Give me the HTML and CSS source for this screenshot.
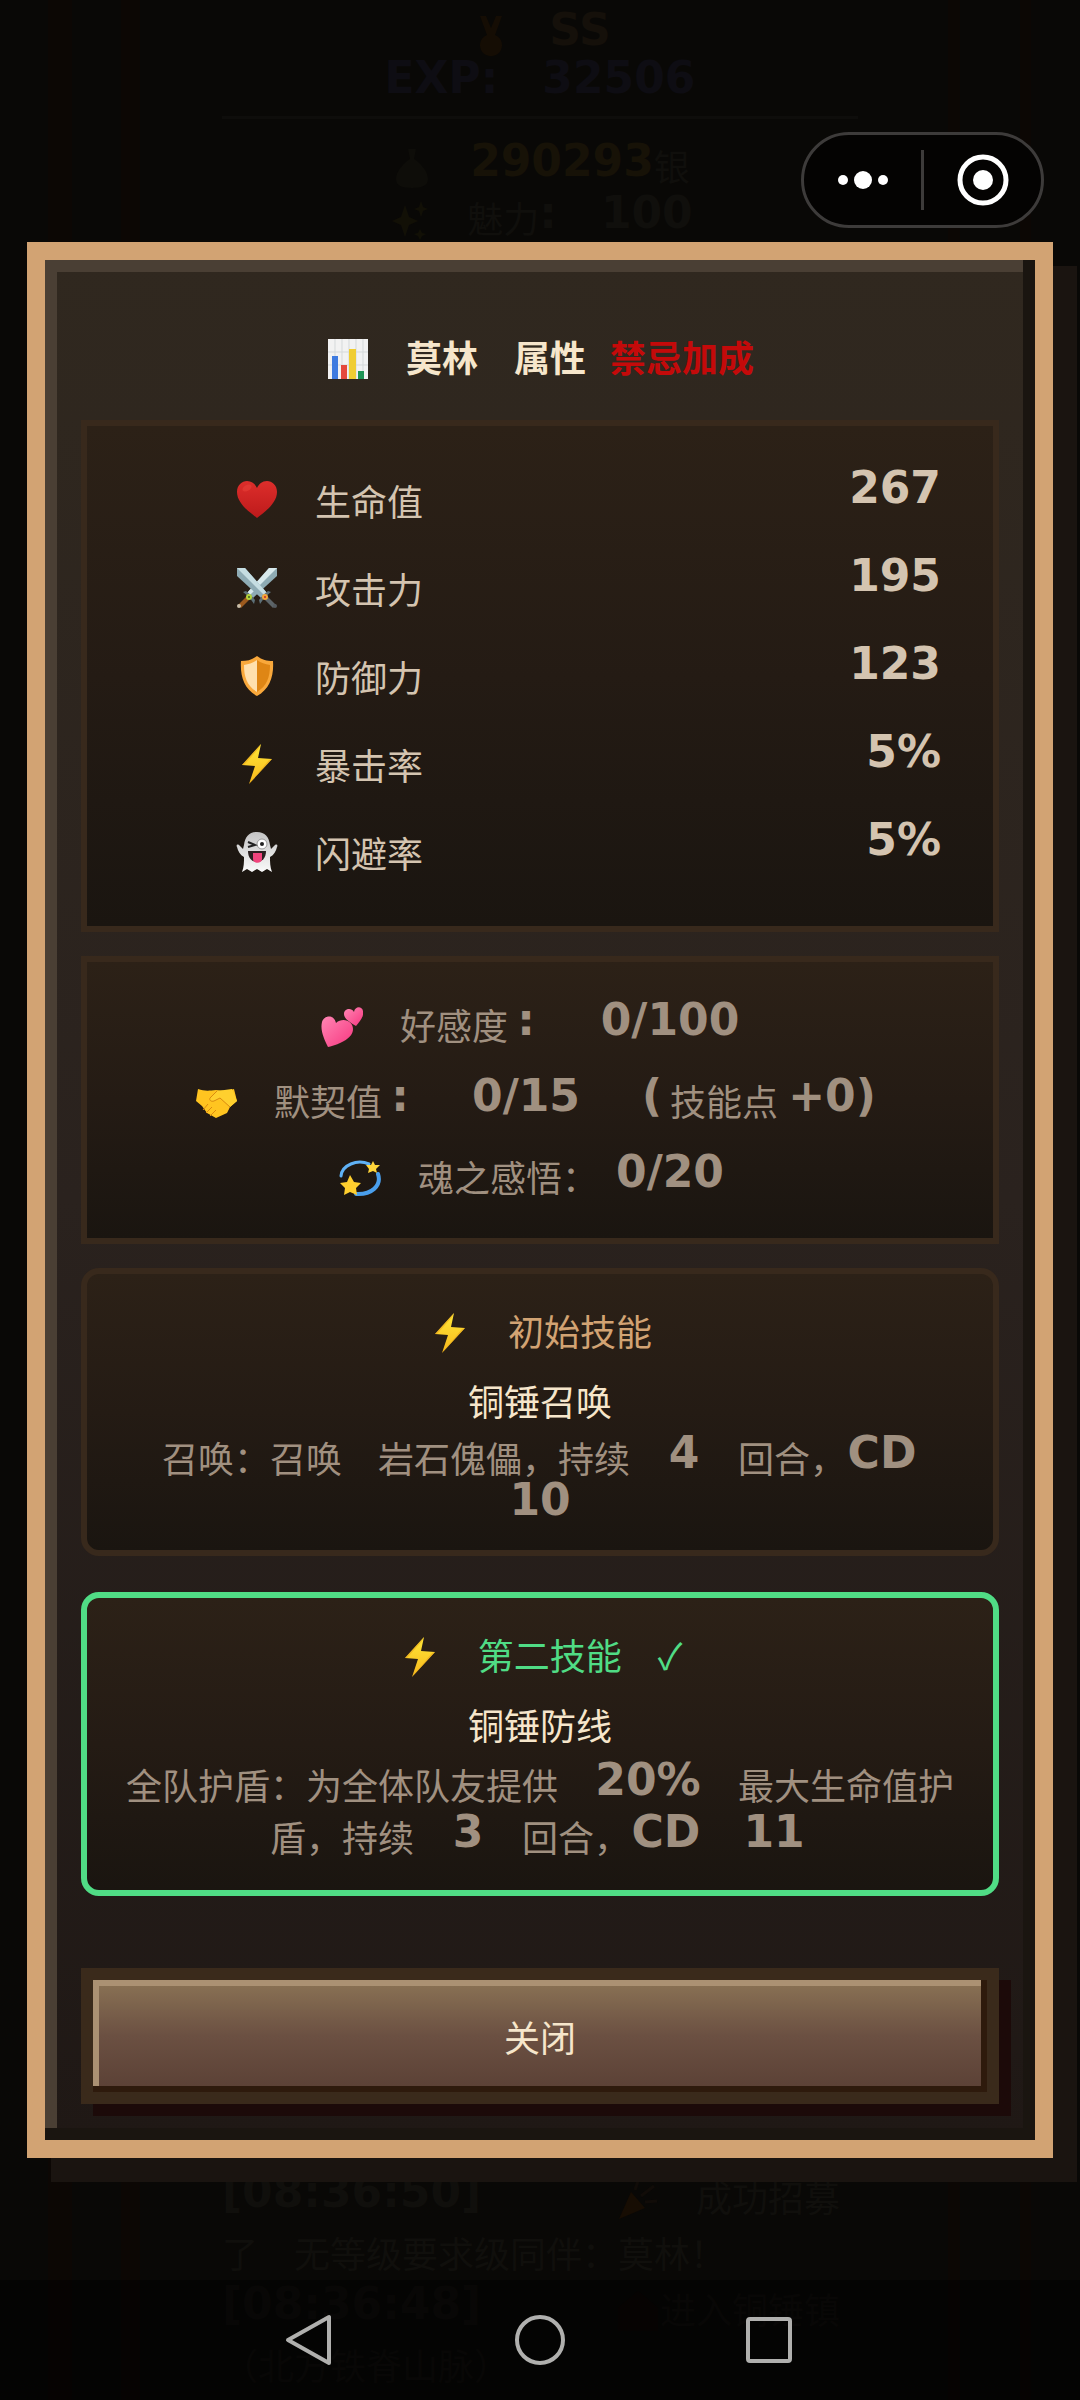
FILE: index.html
```
<!DOCTYPE html>
<html lang="zh-CN">
<head>
  <meta charset="UTF-8">
  <title>莫林 属性</title>
  <meta name="viewport" content="width=device-width, initial-scale=1">
<link rel="stylesheet" href="styles.css">
</head>
<body>
<svg class="defs" aria-hidden="true">
  <defs>
    <linearGradient id="g-bolt" x1="0" y1="0" x2="0" y2="1"><stop offset="0" stop-color="#ffe838"/><stop offset="1" stop-color="#f7b71c"/></linearGradient>
    <linearGradient id="g-heart" x1="0" y1="0" x2="0" y2="1"><stop offset="0" stop-color="#dd2e2b"/><stop offset="1" stop-color="#bd1a1b"/></linearGradient>
    <linearGradient id="g-pink" x1="0" y1="0" x2="1" y2="1"><stop offset="0" stop-color="#ff86b4"/><stop offset="1" stop-color="#f73780"/></linearGradient>
    <linearGradient id="g-ghost" x1="0" y1="0" x2="0" y2="1"><stop offset="0" stop-color="#c4c4c4"/><stop offset="1" stop-color="#fafafa"/></linearGradient>
  </defs>
  <symbol id="bolt" viewBox="0 0 42 42">
    <path d="M25 1 6 22l13 1-6 18 23-25-14-1 3-14z" fill="url(#g-bolt)"/>
    <path d="M25 1 6 22h2L23 5zM13 41l23-25-3 1z" fill="#e8a41a" opacity=".6"/>
  </symbol>
  <symbol id="heart" viewBox="0 0 42 42">
    <path d="M21 39C15 34 1 25 1 13 1 6 6 2 11 2c5 0 8 3 10 7 2-4 5-7 10-7 5 0 10 4 10 11 0 12-14 21-20 26z" fill="url(#g-heart)"/>
    <ellipse cx="11" cy="9" rx="5" ry="3" fill="#f04b42" opacity=".4" transform="rotate(-30 11 9)"/>
  </symbol>
  <symbol id="swords" viewBox="0 0 42 42">
    <path d="M41 1v8L17 31l-6-5L33 1z" fill="#8eabb4"/>
    <path d="M41 1 14 28l-3-2L33 1z" fill="#d8e9ec"/>
    <path d="M10 30 2 38l3 3 8-8z" fill="#9c5a1e"/>
    <path d="M7 25c4 3 8 7 11 12l1-4c-3-4-6-7-9-9z" fill="#5d7078"/>
    <path d="M1 1v8l24 22 6-5L9 1z" fill="#8eabb4"/>
    <path d="M1 1 28 28l3-2L9 1z" fill="#c5dde2"/>
    <path d="m32 30 8 8-3 3-8-8z" fill="#5c6468"/>
    <path d="M35 25c-4 3-8 7-11 12l-1-4c3-4 6-7 9-9z" fill="#5d7078"/>
    <circle cx="13" cy="30" r="3" fill="#b4d33c"/><circle cx="13" cy="30" r="1" fill="#3c5c20"/>
    <circle cx="29" cy="30" r="3" fill="#f2a63a"/><circle cx="29" cy="30" r="1" fill="#c62828"/>
    <circle cx="3" cy="39" r="2" fill="#c8bda8"/><circle cx="39" cy="39" r="2" fill="#555b60"/>
  </symbol>
  <symbol id="shield" viewBox="0 0 42 42">
    <path d="M21 1c5 4 10 5 16 5 1 15-3 28-16 35C8 34 4 21 5 6c6 0 11-1 16-5z" fill="#f9a83b"/>
    <path d="M21 5C17 8 13 9 8 10c0 12 3 21 13 27z" fill="#ffe0ae"/>
    <path d="M21 5c4 3 8 4 13 5 0 12-3 21-13 27z" fill="#df8615"/>
  </symbol>
  <symbol id="ghost" viewBox="0 0 42 42">
    <path d="M21 1c8 0 12 5 13 13l1 4 4-4c2-1 3 0 2 2-1 4-3 8-7 10 0 5 0 10 2 15l-5-3-5 3-5-3-5 3-5-3-5 3c2-5 2-10 2-15-4-2-6-6-7-10-1-2 0-3 2-2l4 4 1-4C9 6 13 1 21 1z" fill="url(#g-ghost)"/>
    <circle cx="26" cy="13" r="5" fill="#fff" stroke="#999"/><circle cx="26" cy="13" r="2" fill="#222"/>
    <path d="m12 11 7 3-7 2" fill="none" stroke="#222" stroke-width="2"/>
    <path d="M12 20h18c0 7-4 11-9 11s-9-4-9-11z" fill="#2b2020"/>
    <path d="M17 22h9v6c0 5-9 5-9 0z" fill="#f0447c"/>
  </symbol>
  <symbol id="hearts" viewBox="0 0 42 42">
    <path d="M7 41C3 33-1 24 1 16c2-7 12-8 14 1 7-6 17-2 17 6 0 9-12 15-25 18z" fill="url(#g-pink)"/>
    <path d="M35 20c-5-3-12-7-12-12 0-5 7-7 10-2 1-6 8-6 9-1 1 6-3 10-7 15z" fill="url(#g-pink)"/>
  </symbol>
  <symbol id="hands" viewBox="0 0 42 42">
    <path d="M3 7c6 2 10 2 18 1 8 1 12 1 18-1l3 12-7 6-3 6-11 5-9-5-5-7-6-5z" fill="#ffc420"/>
    <path d="M15 16l7-7 15-2 5 12-7 6-10-9-6 3c-3 1-5-1-4-3z" fill="#ffd02e"/>
    <path d="M22 9l-7 7c-1 2 1 4 4 3l6-3 10 9M13 22l-5 6M17 25l-6 6M21 28l-6 6" fill="none" stroke="#d98a10"/>
  </symbol>
  <symbol id="dizzy" viewBox="0 0 42 42">
    <path d="M30 6C18 1 3 7 2 18" fill="none" stroke="#5fb1f5" stroke-width="3" stroke-linecap="round"/>
    <path d="M39 16c4 12-7 21-22 20" fill="none" stroke="#4a9fec" stroke-width="4" stroke-linecap="round"/>
    <path d="m34 3 2 4 5 0-4 4 1 4-4-2-5 2 1-4-3-4h5z" fill="#ffd53a"/>
    <path d="m11 17 4 7 7 1-5 5 1 7-7-3-6 3 1-7-5-5 7-1z" fill="#ffcf2e"/>
  </symbol>
  <symbol id="chart" viewBox="0 0 42 42">
    <path d="M1 1h40v40H1z" fill="#f2f2f2"/>
    <path d="M1 14h40M1 27h40M8 1v40M15 1v40M22 1v40M29 1v40M36 1v40" stroke="#d5d9da" fill="none"/>
    <path d="M5 18h6v23H5z" fill="#3f7be0"/><path d="M14 27h6v14h-6z" fill="#e5483c"/>
    <path d="M22 11h7v30h-7z" fill="#f0cd32"/><path d="M31 33h6v8h-6z" fill="#1e9455"/>
  </symbol>
</svg>

<main class="page">
  <section class="status">
    <p class="rank"><svg class="icon" viewBox="0 0 42 42"><path d="M10 0h6l5 12 5-12h6l-7 19a11 11 0 1 1-8 0z" fill="#150d04"/></svg>　<span class="px">SS</span></p>
    <p class="exp"><span class="px">EXP:　32506</span></p>
    <hr>
    <p class="coins"><svg class="icon" viewBox="0 0 42 42"><path d="M17 2h8l-2 10c9 6 14 14 14 20 0 6-5 9-16 9S5 38 5 32c0-6 5-14 14-20z" fill="#0e0d09"/></svg>　<span class="px">290293</span><span class="unit">银</span></p>
    <p class="charm"><svg class="icon" viewBox="0 0 42 42"><path d="m17 6 4 12 9 4-9 4-4 12-4-12-9-4 9-4zM33 2l2 6 5 2-5 2-2 6-2-6-5-2 5-2zM32 30l2 4 4 1-4 2-2 4-2-4-4-2 4-1z" fill="#121006"/></svg>　魅力<span class="px">:　100</span></p>
  </section>
  <section class="log">
    <p><span class="px stamp">[08:36:50]</span><svg class="icon" viewBox="0 0 42 42"><path d="m14 14 14 16L2 41z" fill="#170d03"/><path d="m18 12 3-9m3 15 13-10M28 24l12-1" stroke="#110c08" stroke-width="3"/></svg>　成功招募<br>了　无等级要求级同伴：莫林！</p>
    <p><span class="px stamp">[08:36:48]</span><svg class="icon" viewBox="0 0 42 42"><path d="M21 1 41 18v23H1V18z" fill="#0d0704"/></svg>进入铜锤镇<br>（北方铁脊山脉）</p>
  </section>
</main>

<div class="overlay">
  <div class="modal" role="dialog" aria-labelledby="title">
    <h1 id="title"><svg class="icon"><use href="#chart"/></svg>　莫林　属性<span class="bonus">禁忌加成</span></h1>

    <dl class="card stats">
      <div class="stat"><dt><svg class="icon"><use href="#heart"/></svg>生命值</dt><dd class="px">267</dd></div>
      <div class="stat"><dt><svg class="icon"><use href="#swords"/></svg>攻击力</dt><dd class="px">195</dd></div>
      <div class="stat"><dt><svg class="icon"><use href="#shield"/></svg>防御力</dt><dd class="px">123</dd></div>
      <div class="stat"><dt><svg class="icon"><use href="#bolt"/></svg>暴击率</dt><dd class="px">5%</dd></div>
      <div class="stat"><dt><svg class="icon"><use href="#ghost"/></svg>闪避率</dt><dd class="px">5%</dd></div>
    </dl>

    <div class="card bonds">
      <p><svg class="icon"><use href="#hearts"/></svg>　好感度<span class="px w1">:</span>　<span class="px w5">0/100</span></p>
      <p><svg class="icon"><use href="#hands"/></svg>　默契值<span class="px w1">:</span>　<span class="px w4">0/15</span>　<span class="px w1">(</span>技能点<span class="px w3">+0)</span></p>
      <p><svg class="icon"><use href="#dizzy"/></svg>　魂之感悟：<span class="px w4">0/20</span></p>
    </div>

    <section class="card skill">
      <h2><svg class="icon"><use href="#bolt"/></svg>　初始技能</h2>
      <h3>铜锤召唤</h3>
      <p class="desc tight">召唤：召唤　岩石傀儡，持续　<span class="px w1">4</span>　回合，<span class="px w2">CD</span><br><span class="px w2">10</span></p>
    </section>

    <section class="card skill active">
      <h2><svg class="icon"><use href="#bolt"/></svg>　第二技能　✓</h2>
      <h3>铜锤防线</h3>
      <p class="desc">全队护盾：为全体队友提供　<span class="px w3">20%</span>　最大生命值护<br>盾，持续　<span class="px w1">3</span>　回合，<span class="px w2">CD</span>　<span class="px w2">11</span></p>
    </section>

    <button type="button" class="close">关闭</button>
  </div>
</div>

<div class="capsule">
  <button type="button" aria-label="更多">
    <svg width="50" height="20" viewBox="0 0 50 20"><circle cx="5" cy="10" r="5"/><circle cx="25" cy="10" r="9"/><circle cx="45" cy="10" r="5"/></svg>
  </button>
  <button type="button" aria-label="关闭小程序">
    <svg width="52" height="52" viewBox="0 0 52 52"><circle cx="26" cy="26" r="23" fill="none" stroke="#fff" stroke-width="5"/><circle cx="26" cy="26" r="10"/></svg>
  </button>
</div>

<nav class="navbar">
  <button type="button" aria-label="返回"><svg width="52" height="52" viewBox="0 0 52 52"><path d="M45 3v46L4 26z"/></svg></button>
  <button type="button" aria-label="主页"><svg width="52" height="52" viewBox="0 0 52 52"><circle cx="26" cy="26" r="23"/></svg></button>
  <button type="button" aria-label="最近任务"><svg width="52" height="52" viewBox="0 0 52 52"><rect x="4" y="5" width="42" height="42" rx="2"/></svg></button>
</nav>
</body>
</html>
```

FILE: styles.css
```
* {
  box-sizing: border-box;
  margin: 0;
  padding: 0;
}
body {
  position: relative;
  min-height: 100vh;
  background: #090806;
  color: #a09080;
  font: 36px/52px "Noto Sans CJK SC", sans-serif;
}
button {
  border: none;
  background: none;
  font: inherit;
}
.defs {
  position: absolute;
  width: 0;
  height: 0;
}
.icon {
  width: 42px;
  height: 42px;
  margin: 0 1px;
  vertical-align: -8px;
}

/* numbers sit on a grid of 36px cells */
.px {
  display: inline-block;
  font: bold 44px/36px "DejaVu Sans", sans-serif;
  vertical-align: 5px;
  white-space: nowrap;
}
.w1 { width: 36px; }
.w2 { width: 72px; }
.w3 { width: 108px; }
.w4 { width: 144px; }
.w5 { width: 180px; }

/* dimmed game page */
.page {
  display: flex;
  flex-direction: column;
  justify-content: space-between;
  height: 100vh;
  overflow: hidden;
  padding: 8px 222px;
  color: #100f0c;
  background: linear-gradient(90deg, transparent 48px, #0c0704 48px, #0c0704 72px, transparent 72px, transparent 121px, #0c0704 121px, #0c0704 140px, transparent 140px, transparent calc(100% - 132px), #0c0704 calc(100% - 132px), #0c0704 calc(100% - 120px), transparent calc(100% - 120px), transparent calc(100% - 60px), #0c0704 calc(100% - 60px), #0c0704 calc(100% - 49px), transparent calc(100% - 49px));
}
.status {
  text-align: center;
}
.status p {
  height: 52px;
}
.status .rank {
  height: 48px;
  color: #15100a;
}
.status .exp {
  height: 48px;
  color: #0e0d13;
}
.status hr {
  border: none;
  height: 3px;
  margin: 12px 0 20px;
  background: #0e0d0b;
}
.status .coins .px {
  color: #171207;
}
.log p {
  line-height: 56px;
}
.stamp {
  width: 394px;
}

/* dialog */
.overlay {
  position: absolute;
  top: 0;
  left: 0;
  display: flex;
  align-items: center;
  justify-content: center;
  width: 100%;
  height: 100%;
}
.modal {
  width: 95%;
  padding: 36px;
  border: 18px solid #d2a373;
  background: linear-gradient(#30281f, #2a221e 50%, #1f1815);
  box-shadow: inset -12px -12px 0 #1a1510, inset 12px 12px 0 #4a3f34, 24px 24px 0 #1a1410;
  text-align: center;
}
.modal h1 {
  padding: 34px 0 38px;
  color: #f6e6cb;
  font-size: 36px;
  line-height: 52px;
}
.modal .bonus {
  margin-left: 24px;
  color: #c40a0a;
}
.card {
  margin-bottom: 24px;
  border: 6px solid #38291c;
  background: linear-gradient(#2c2117, #241b14 50%, #1a1510);
}
.stats {
  padding: 30px 52px 30px 48px;
  color: #d4c4b0;
}
.stat {
  display: flex;
  justify-content: space-between;
  align-items: center;
  height: 88px;
}
.stat dt {
  display: flex;
  align-items: center;
  gap: 36px;
  padding-left: 100px;
}
.stat .px {
  padding-bottom: 24px;
}
.bonds {
  padding: 24px 0;
}
.bonds p {
  line-height: 76px;
}
.skill {
  margin-bottom: 36px;
  padding: 30px 0 22px;
  border-radius: 18px;
}
.skill h2,
.skill h3 {
  font-size: 36px;
  font-weight: normal;
}
.skill h2 {
  margin-bottom: 18px;
  color: #d2a373;
}
.skill h3 {
  margin-bottom: 8px;
  color: #f6e6cb;
}
.desc.tight {
  line-height: 47px;
}
.active {
  margin-bottom: 72px;
  padding-bottom: 28px;
  border-color: #50dc85;
}
.active h2 {
  color: #50dc85;
}
.close {
  display: block;
  width: 100%;
  height: 136px;
  border: 12px solid #3a2a1b;
  background: linear-gradient(#8b7355, #6b5042 50%, #5a4035);
  box-shadow: inset -6px -6px 0 #2e1a0c, inset 6px 6px 0 #ab9173, 12px 12px 0 #1c0a09;
  color: #f6e6cb;
}

/* system chrome */
.capsule {
  position: absolute;
  top: 132px;
  right: 36px;
  display: flex;
  align-items: center;
  width: 243px;
  height: 96px;
  border: 3px solid #3d3b3a;
  border-radius: 48px;
  background: #040302;
}
.capsule button {
  display: flex;
  flex: 1;
  align-items: center;
  justify-content: center;
  height: 60px;
}
.capsule button + button {
  border-left: 3px solid #3d3b3a;
}
.capsule svg {
  fill: #fff;
}
.navbar {
  position: absolute;
  bottom: 0;
  left: 0;
  display: flex;
  align-items: center;
  justify-content: center;
  gap: 178px;
  width: 100%;
  height: 120px;
  background: rgba(0, 0, 0, .5);
}
.navbar svg {
  display: block;
  fill: none;
  stroke: #b0b0ae;
  stroke-width: 4;
  stroke-linejoin: round;
}
```
